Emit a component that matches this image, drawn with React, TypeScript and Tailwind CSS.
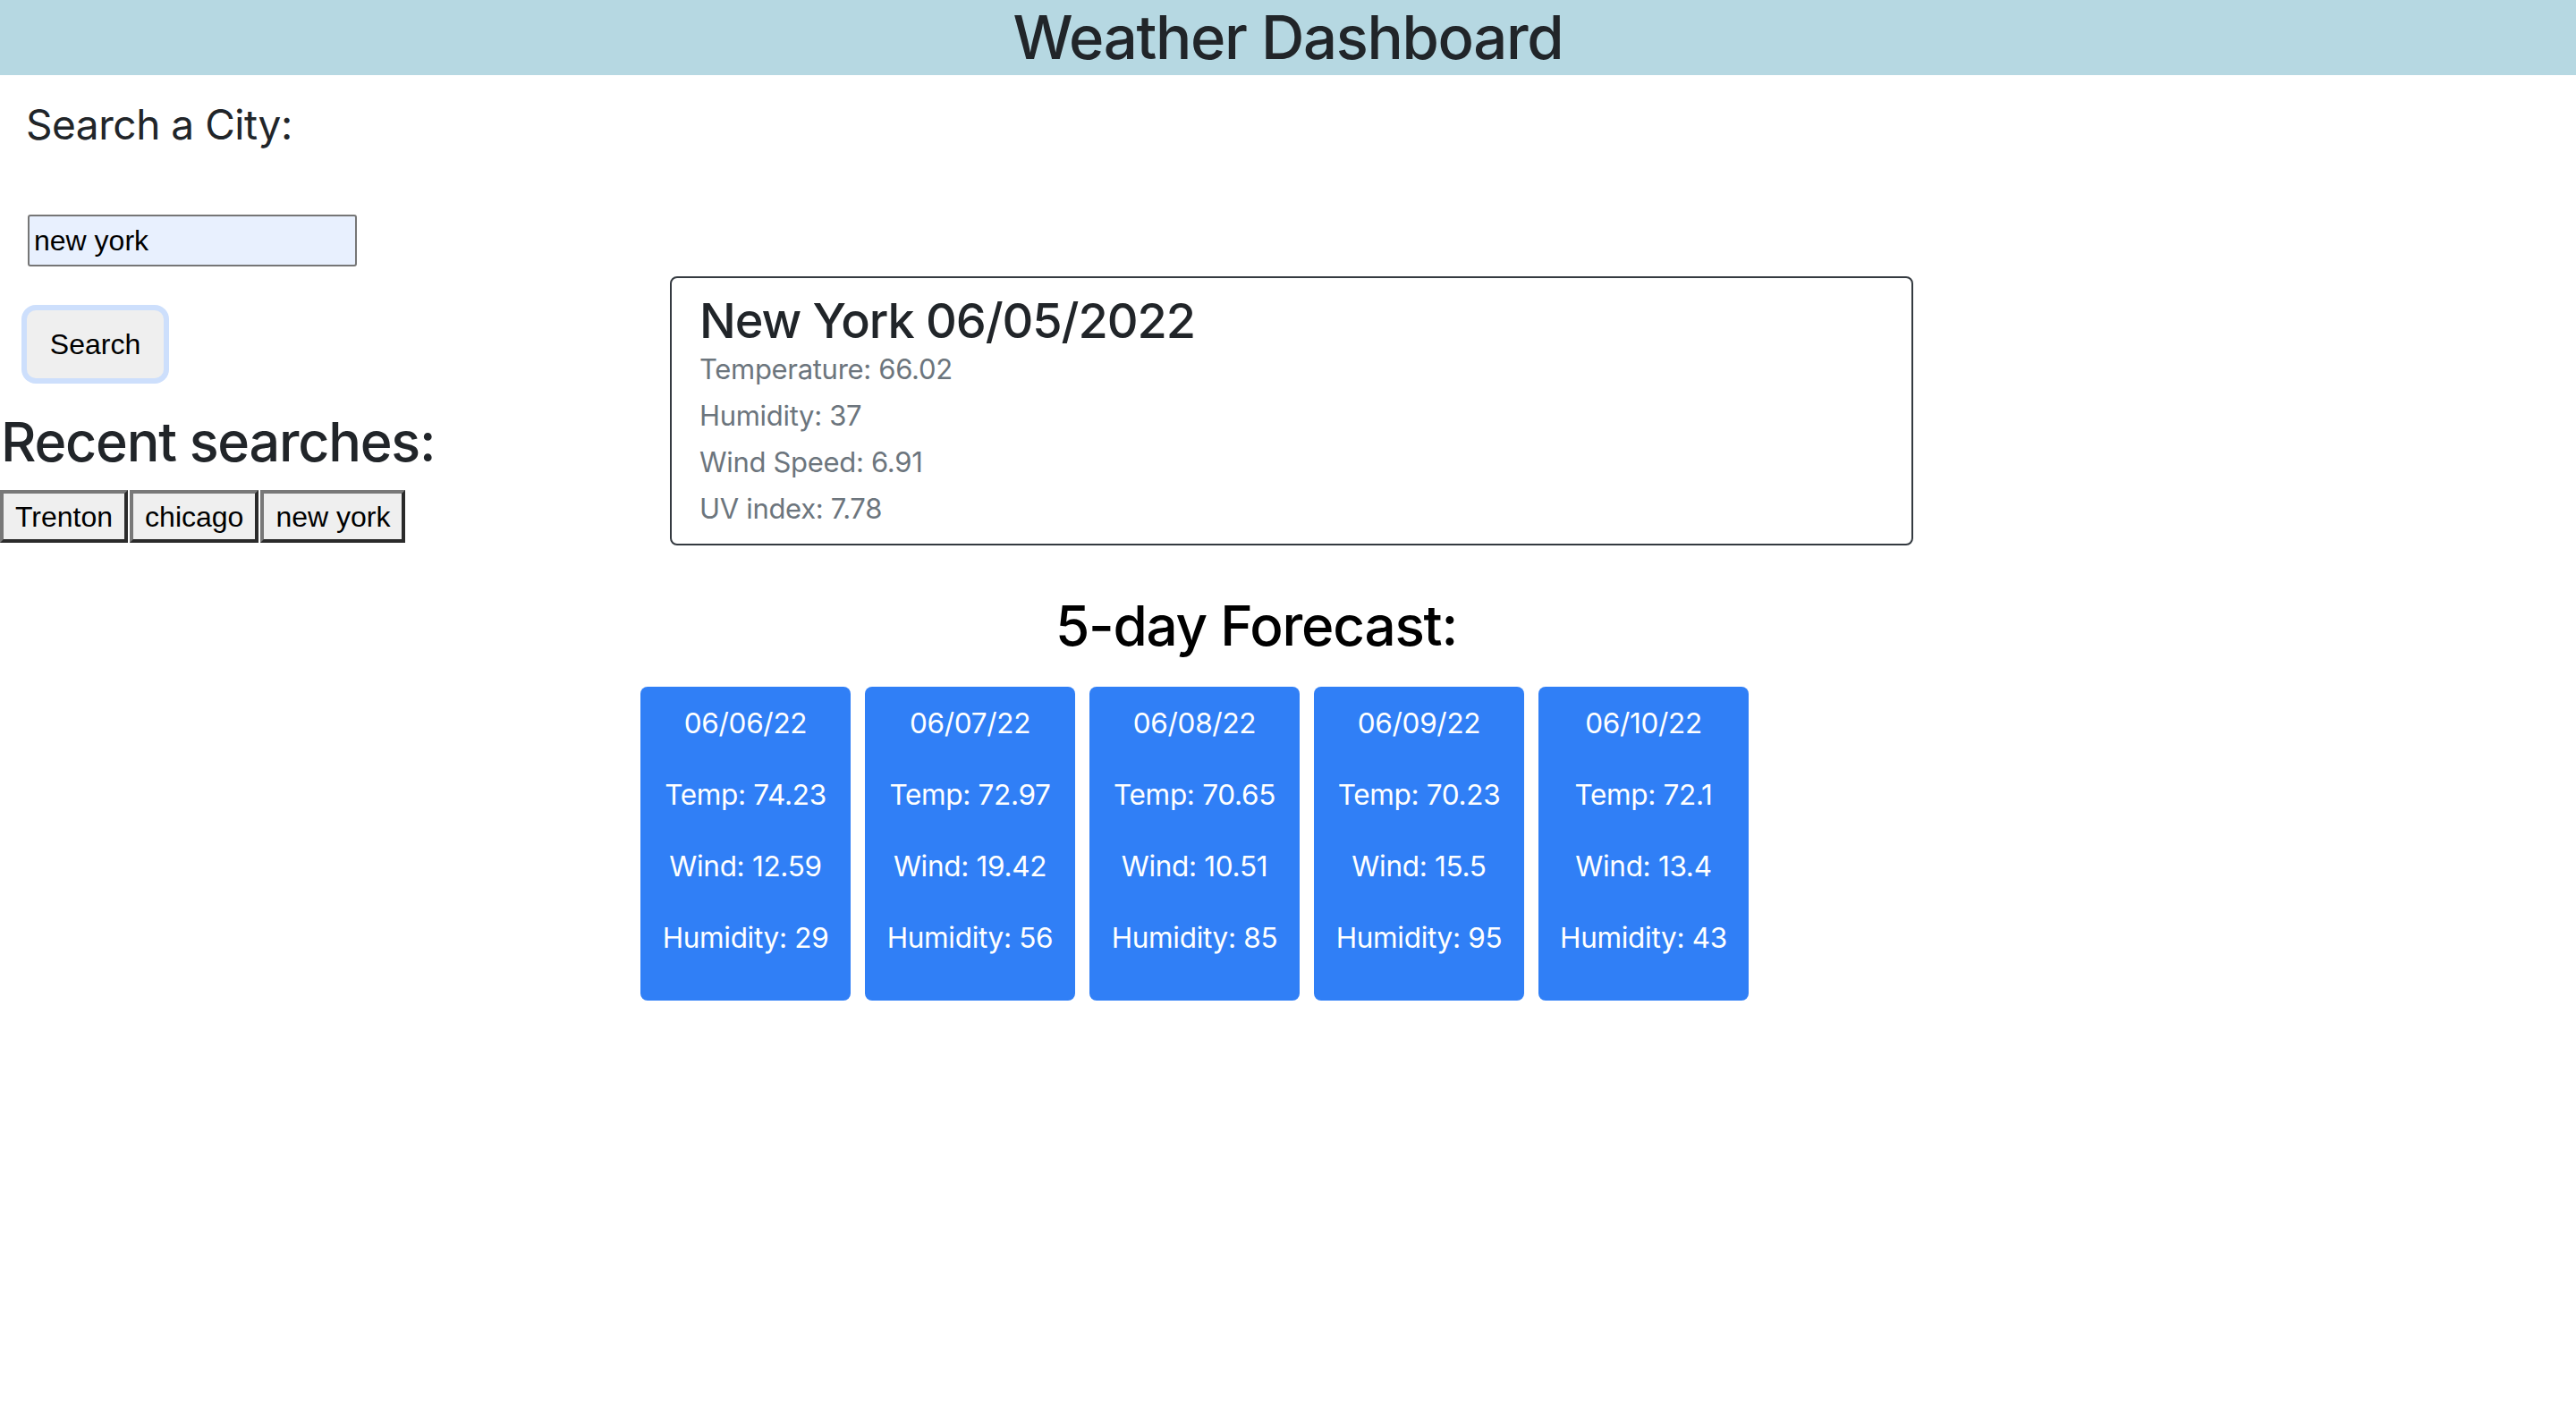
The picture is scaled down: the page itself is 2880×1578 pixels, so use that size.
import { useState } from "react";

/* ===== data ===== */
const CURRENT = {
  city: "New York",
  date: "06/05/2022",
  rows: ["Temperature: 66.02", "Humidity: 37", "Wind Speed: 6.91", "UV index: 7.78"],
};

const FORECAST = [
  { date: "06/06/22", temp: "74.23", wind: "12.59", humidity: "29" },
  { date: "06/07/22", temp: "72.97", wind: "19.42", humidity: "56" },
  { date: "06/08/22", temp: "70.65", wind: "10.51", humidity: "85" },
  { date: "06/09/22", temp: "70.23", wind: "15.5", humidity: "95" },
  { date: "06/10/22", temp: "72.1", wind: "13.4", humidity: "43" },
];

const RECENT = ["Trenton", "chicago", "new york"];

export default function App() {
  const [city, setCity] = useState("new york");

  return (
    <div className="min-h-screen bg-white text-[#212529] font-['Inter',sans-serif]">
      {/* header */}
      <header className="h-[84px] bg-[#b6d8e2] text-center">
        <h1 className="text-[67px] leading-[84px] font-medium tracking-[-0.02em]">Weather Dashboard</h1>
      </header>

      <div className="flex items-start">
        {/* left: search */}
        <aside className="w-[716px] shrink-0">
          <h4 className="mt-[27px] pl-[29px] text-[46px] leading-[56px] font-normal tracking-[-0.01em]">
            Search a City:
          </h4>
          <input
            value={city}
            onChange={(e) => setCity(e.target.value)}
            className="mt-[73px] ml-[31px] block h-[58px] w-[368px] rounded-[3px] border-2 border-[#767676] bg-[#e8f0fe] pl-[5px] font-['Liberation_Sans',Arial,sans-serif] text-[32px] text-black outline-none"
          />
          <button className="mt-[49px] ml-[30px] block h-[76px] w-[153px] rounded-[10px] bg-[#efefef] font-['Liberation_Sans',Arial,sans-serif] text-[32px] text-black ring-[6px] ring-[#cddffc]">
            Search
          </button>
          <h2 className="mt-[35px] pl-[1px] text-[61px] leading-[72px] font-medium tracking-[-0.02em]">
            Recent searches:
          </h2>
          <div className="mt-[18px] flex gap-[2px]">
            {RECENT.map((r) => (
              <button
                key={r}
                className="h-[59px] border-4 border-t-[#787878] border-l-[#787878] border-b-[#2b2b2b] border-r-[#2b2b2b] bg-[#efefef] px-[13px] font-['Liberation_Sans',Arial,sans-serif] text-[32px] text-black"
              >
                {r}
              </button>
            ))}
          </div>
        </aside>

        {/* right: current + forecast */}
        <main className="flex-1">
          <section className="mt-[225px] ml-[33px] h-[301px] w-[1390px] rounded-[8px] border-2 border-[#343a40] px-[31px] pt-[23px]">
            <h3 className="text-[54px] leading-[50px] font-medium tracking-[-0.02em]">
              {CURRENT.city} {CURRENT.date}
            </h3>
            <div className="mt-[9px] flex flex-col gap-[12px] text-[#6c757d]">
              {CURRENT.rows.map((r) => (
                <p key={r} className="text-[31px] leading-[40px] tracking-[-0.01em]">
                  {r}
                </p>
              ))}
            </div>
          </section>

          <h2 className="mt-[54px] w-[1377px] text-center text-[62px] leading-[72px] font-medium tracking-[-0.02em] text-black">
            5-day Forecast:
          </h2>

          <div className="mt-[32px] flex gap-[16px]">
            {FORECAST.map((d) => (
              <div
                key={d.date}
                className="flex h-[351px] w-[235px] flex-col items-center rounded-[8px] bg-[#307ff6] pt-[17px] text-[31.5px] leading-[48px] tracking-[-0.01em] text-white"
              >
                <p className="mb-[32px]">{d.date}</p>
                <p className="mb-[32px]">Temp: {d.temp}</p>
                <p className="mb-[32px]">Wind: {d.wind}</p>
                <p>Humidity: {d.humidity}</p>
              </div>
            ))}
          </div>
        </main>
      </div>
    </div>
  );
}
